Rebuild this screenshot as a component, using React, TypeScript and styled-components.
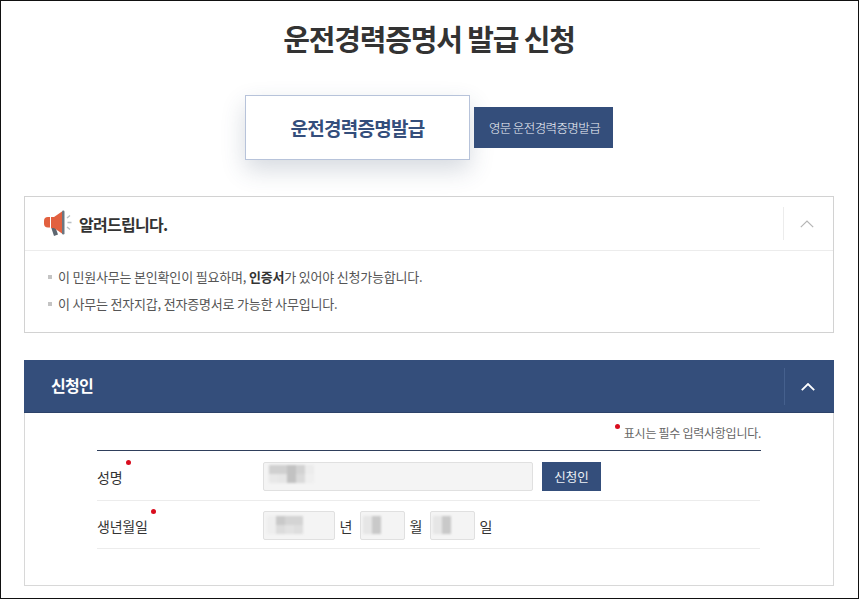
import React from "react";
import styled, { createGlobalStyle } from "styled-components";

const NAVY = "#344e7b";

const GlobalStyle = createGlobalStyle`
  html, body {
    margin: 0;
    padding: 0;
    background: #fff;
  }
  body {
    font-family: "Noto Sans CJK KR", "Noto Sans", sans-serif;
    color: #333;
  }
`;

const Page = styled.div`
  width: 860px;
  height: 600px;
`;

const Frame = styled.div`
  width: 859px;
  height: 599px;
  box-sizing: border-box;
  border: 1px solid #111;
  padding: 0 24px 0 23px;
  overflow: hidden;
`;

const Title = styled.h1`
  margin: 17px 0 0;
  height: 41px;
  font-size: 29px;
  line-height: 41px;
  font-weight: 700;
  letter-spacing: -1.15px;
  text-align: center;
  color: #333;
`;

const Tabs = styled.div`
  display: flex;
  align-items: center;
  justify-content: center;
  gap: 4px;
  margin-top: 36px;
`;

const ActiveTab = styled.div`
  width: 225px;
  height: 65px;
  box-sizing: border-box;
  border: 1px solid #b7c3da;
  background: #fff;
  box-shadow: 0 10px 24px rgba(52, 70, 100, 0.2);
  display: flex;
  align-items: center;
  justify-content: center;
  color: ${NAVY};
  font-size: 19px;
  font-weight: 700;
  letter-spacing: -0.72px;
`;

const Tab = styled.div`
  width: 139px;
  height: 41px;
  padding-left: 2px;
  box-sizing: border-box;
  background: ${NAVY};
  display: flex;
  align-items: center;
  justify-content: center;
  color: #f0f3f8;
  font-size: 12.5px;
  font-weight: 300;
  letter-spacing: -0.6px;
`;

const Notice = styled.section`
  margin-top: 36px;
  height: 137px;
  box-sizing: border-box;
  border: 1px solid #d2d2d2;
`;

const NoticeHead = styled.div`
  height: 54px;
  box-sizing: border-box;
  border-bottom: 1px solid #ececec;
  display: flex;
  align-items: center;
  padding-left: 18px;
`;

const NoticeTitle = styled.h2`
  margin: 0 0 0 6px;
  font-size: 16px;
  font-weight: 700;
  letter-spacing: -0.7px;
  color: #333;
  flex: 1;
`;

const Toggle = styled.div<{ $dark?: boolean }>`
  width: 50px;
  height: ${(p) => (p.$dark ? 37 : 33)}px;
  padding-right: 4px;
  box-sizing: border-box;
  border-left: 1px solid ${(p) => (p.$dark ? "#45608d" : "#ececec")};
  display: flex;
  align-items: center;
  justify-content: center;
  svg {
    display: block;
    margin-top: 1px;
  }
`;

const NoticeList = styled.ul`
  list-style: none;
  margin: 0;
  padding: 12px 0 0 23px;
`;

const NoticeItem = styled.li`
  display: flex;
  align-items: center;
  height: 27px;
  font-size: 13px;
  font-weight: 400;
  letter-spacing: -0.19px;
  color: #555;
  &::before {
    content: "";
    width: 4px;
    height: 4px;
    background: #c4c4c4;
    margin-right: 6px;
  }
  strong {
    font-weight: 700;
    color: #333;
  }
  span {
    white-space: pre;
  }
`;

const Panel = styled.section`
  margin-top: 27px;
  height: 226px;
  box-sizing: border-box;
  border: 1px solid #d8d8d8;
  border-top: 0;
`;

const PanelHead = styled.div`
  height: 53px;
  margin: 0 -1px;
  background: ${NAVY};
  border-bottom: 1px solid #2c4269;
  box-sizing: border-box;
  display: flex;
  align-items: center;
  padding-left: 27px;
`;

const PanelTitle = styled.h2`
  margin: 0 0 2px;
  flex: 1;
  color: #fff;
  font-size: 16px;
  font-weight: 700;
  letter-spacing: -0.7px;
`;

const PanelBody = styled.div`
  padding: 0 72px;
`;

const RequiredNote = styled.p`
  margin: 0;
  height: 37px;
  display: flex;
  justify-content: flex-end;
  align-items: center;
  padding-top: 1px;
  box-sizing: border-box;
  font-size: 12px;
  letter-spacing: -0.27px;
  color: #666;
`;

const Dot = styled.i<{ $gap?: number; $lift?: number }>`
  display: inline-block;
  width: 5px;
  height: 5px;
  border-radius: 50%;
  background: #d90d1e;
  margin-left: ${(p) => p.$gap ?? 0}px;
  margin-right: ${(p) => (p.$gap ? 0 : 4)}px;
  transform: translateY(${(p) => -(p.$lift ?? 0)}px);
`;

const FormTable = styled.div`
  border-top: 1px solid #2f3f5c;
`;

const Row = styled.div<{ $height: number }>`
  height: ${(p) => p.$height}px;
  margin-right: 1px;
  padding-top: 2px;
  box-sizing: border-box;
  border-bottom: 1px solid #ececec;
  display: flex;
  align-items: center;
`;

const Label = styled.div`
  width: 166px;
  display: flex;
  align-items: center;
  font-size: 14px;
  letter-spacing: -0.2px;
  color: #333;
`;

const Fields = styled.div`
  display: flex;
  align-items: center;
`;

const Input = styled.div<{ $width: number; $pad: number; $top: number }>`
  width: ${(p) => p.$width}px;
  height: 29px;
  box-sizing: border-box;
  background: #f4f4f4;
  border: 1px solid #e0e0e0;
  border-radius: 2px;
  padding: ${(p) => p.$top}px 0 0 ${(p) => p.$pad}px;
`;

const Mosaic = styled.div<{ $cols: number }>`
  display: grid;
  grid-template-columns: repeat(${(p) => p.$cols}, 9px);
  grid-auto-rows: 9px;
  filter: blur(0.8px);
`;

const Pixel = styled.div<{ $tone: string }>`
  background: ${(p) => p.$tone};
`;

const Unit = styled.span`
  width: 25px;
  padding-right: 3px;
  box-sizing: border-box;
  text-align: center;
  font-size: 14px;
  color: #333;
`;

const SmallButton = styled.div`
  width: 59px;
  height: 29px;
  margin-left: 9px;
  background: ${NAVY};
  color: #eef1f6;
  font-size: 12.5px;
  display: flex;
  align-items: center;
  justify-content: center;
`;

const Megaphone = () => (
  <svg width="30" height="27" viewBox="0 0 30 27">
    <path d="M8 17l4.500 .5 2.500 7-4 1.500z" fill="#5d6670" />
    <path d="M7 7H5a4 4 0 0 0-4 4v2.500a4 4 0 0 0 4 4h2z" fill="#e2603f" />
    <path d="M8 7h3l8-5.500v22L11 18H8z" fill="#e2603f" />
    <rect x="19" y="0.500" width="2.500" height="24" rx="1.200" fill="#6c7680" />
    <path d="M24 8l3-2.500M24.500 12.500H28.500M24 17l3 2.500" stroke="#b9bfc4" strokeWidth="1.400" />
  </svg>
);

const Chevron = ({ color, weight }: { color: string; weight: number }) => (
  <svg width="14" height="8" viewBox="0 0 14 8" fill="none">
    <path d="M0.8 7.200L7 1l6.200 6.200" stroke={color} strokeWidth={weight} />
  </svg>
);

const nameCells = ["#d0d0d0", "#d0d0d0", "#c2c2c2", "#d2d2d2", "#ececec", "#e8e8e8", "#e6e6e6", "#c2c2c2", "#dadada", "#efefef"];
const yearCells = ["#eeeeee", "#c9c9c9", "#d4d4d4", "#d4d4d4", "#eeeeee", "#dcdcdc", "#e2e2e2", "#dedede"];
const dayCells = ["#e6e6e6", "#c9c9c9", "#e6e6e6", "#c9c9c9"];

const App = () => {
  return (
    <Page>
      <GlobalStyle />
      <Frame>
        <Title>운전경력증명서 발급 신청</Title>
        <Tabs>
          <ActiveTab>운전경력증명발급</ActiveTab>
          <Tab>영문 운전경력증명발급</Tab>
        </Tabs>

        <Notice>
          <NoticeHead>
            <Megaphone />
            <NoticeTitle>알려드립니다.</NoticeTitle>
            <Toggle>
              <Chevron color="#b5b5b5" weight={1.2} />
            </Toggle>
          </NoticeHead>
          <NoticeList>
            <NoticeItem>
              <span>이 민원사무는 본인확인이 필요하며, </span>
              <strong>인증서</strong>
              <span>가 있어야 신청가능합니다.</span>
            </NoticeItem>
            <NoticeItem>이 사무는 전자지갑, 전자증명서로 가능한 사무입니다.</NoticeItem>
          </NoticeList>
        </Notice>

        <Panel>
          <PanelHead>
            <PanelTitle>신청인</PanelTitle>
            <Toggle $dark>
              <Chevron color="#fff" weight={1.8} />
            </Toggle>
          </PanelHead>
          <PanelBody>
            <RequiredNote>
              <Dot $lift={6} />
              표시는 필수 입력사항입니다.
            </RequiredNote>
            <FormTable>
              <Row $height={50}>
                <Label>
                  성명
                  <Dot $gap={4} $lift={14} />
                </Label>
                <Fields>
                  <Input $width={270} $pad={5} $top={2}>
                    <Mosaic $cols={5}>
                      {nameCells.map((tone, i) => (
                        <Pixel key={i} $tone={tone} />
                      ))}
                    </Mosaic>
                  </Input>
                  <SmallButton>신청인</SmallButton>
                </Fields>
              </Row>
              <Row $height={48}>
                <Label>
                  생년월일
                  <Dot $gap={3} $lift={14} />
                </Label>
                <Fields>
                  <Input $width={72} $pad={3} $top={4}>
                    <Mosaic $cols={4}>
                      {yearCells.map((tone, i) => (
                        <Pixel key={i} $tone={tone} />
                      ))}
                    </Mosaic>
                  </Input>
                  <Unit>년</Unit>
                  <Input $width={45} $pad={2} $top={4}>
                    <Mosaic $cols={2}>
                      {dayCells.map((tone, i) => (
                        <Pixel key={i} $tone={tone} />
                      ))}
                    </Mosaic>
                  </Input>
                  <Unit>월</Unit>
                  <Input $width={45} $pad={2} $top={4}>
                    <Mosaic $cols={2}>
                      {dayCells.map((tone, i) => (
                        <Pixel key={i} $tone={tone} />
                      ))}
                    </Mosaic>
                  </Input>
                  <Unit>일</Unit>
                </Fields>
              </Row>
            </FormTable>
          </PanelBody>
        </Panel>
      </Frame>
    </Page>
  );
};

export default App;
